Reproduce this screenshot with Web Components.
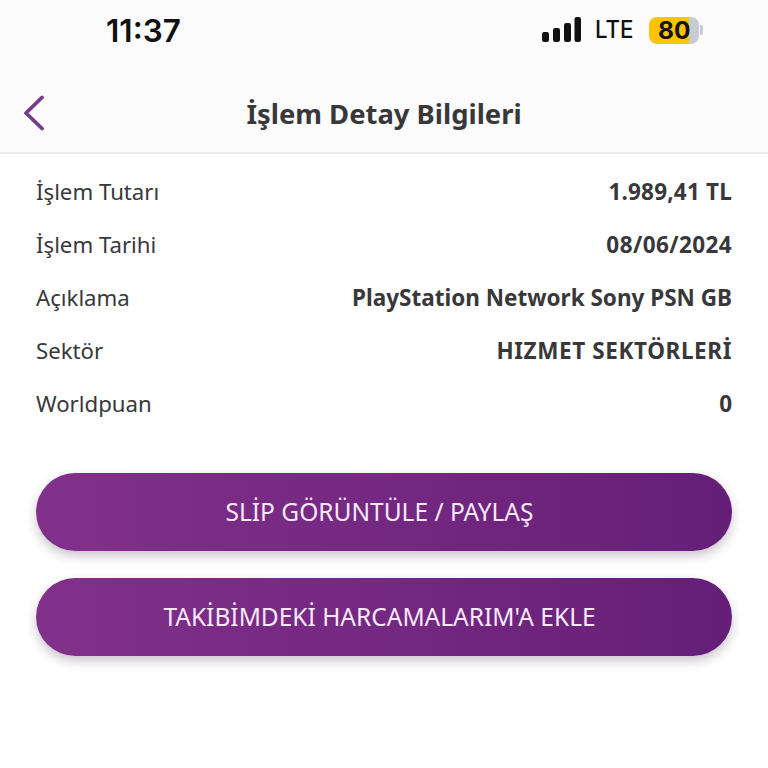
<!DOCTYPE html>
<html lang="tr"><head><meta charset="utf-8"><style>
html,body{margin:0;padding:0;background:#fff}
body{width:768px;height:768px;overflow:hidden;font-family:"Noto Sans","Open Sans",sans-serif}
</style></head><body>
<app-screen>
<status-bar slot="top"></status-bar>
<nav-header slot="top" title="İşlem Detay Bilgileri"></nav-header>
<detail-row label="İşlem Tutarı" value="1.989,41 TL" spacing=".2px"></detail-row>
<detail-row label="İşlem Tarihi" value="08/06/2024" spacing=".4px"></detail-row>
<detail-row label="Açıklama" value="PlayStation Network Sony PSN GB"></detail-row>
<detail-row label="Sektör" value="HIZMET SEKTÖRLERİ" spacing=".6px"></detail-row>
<detail-row label="Worldpuan" value="0"></detail-row>
<pill-button slot="actions">SLİP GÖRÜNTÜLE / PAYLAŞ</pill-button>
<pill-button slot="actions">TAKİBİMDEKİ HARCAMALARIM'A EKLE</pill-button>
</app-screen>
<script>
function def(name,html,init){
  customElements.define(name,class extends HTMLElement{
    connectedCallback(){
      if(this.shadowRoot)return;
      const r=this.attachShadow({mode:'open'});
      r.innerHTML=html;
      if(init)init(this,r);
    }
  });
}
def('app-screen',`<style>
:host{display:block;width:768px;height:768px;background:#fff}
.top{display:block;background:#fcfcfc;border-bottom:2px solid #e9e9ea;height:152px}
.rows{display:block;padding:11px 36px 0 36px}
.actions{display:flex;flex-direction:column;gap:27px;padding:43px 36px 0 36px}
</style><div class="top"><slot name="top"></slot></div><div class="rows"><slot></slot></div><div class="actions"><slot name="actions"></slot></div>`);
def('status-bar',`<style>
:host{display:flex;height:60px;align-items:center;color:#111;font-family:"Inter","Liberation Sans",sans-serif}
.time{margin-left:106px;padding-top:2px;font-size:31.500px;font-weight:600;line-height:58px}
.right{margin-left:auto;margin-right:65px;display:flex;align-items:center}
.lte{font-size:24px;font-weight:500;margin-left:14px;margin-right:15px;width:39px;line-height:30px;white-space:nowrap;transform:scaleX(.93);transform-origin:left}
.batt{display:flex;align-items:center}
.cell{width:50px;height:27px;border-radius:8px;background:linear-gradient(90deg,#fbc405 0 80%,#c9cbd2 80%);display:flex;align-items:center;padding-left:9px;box-sizing:border-box;font-size:24.500px;font-weight:700;color:#17130a}
.cap{width:3px;height:10px;margin-left:1px;background:#c9cbd2;border-radius:0 2px 2px 0}
</style><span class="time">11:37</span><div class="right">
<svg width="40" height="26" viewBox="0 0 40 26" fill="#111"><rect x="1" y="15" width="7" height="10" rx="2.2"/><rect x="12" y="11" width="7" height="14" rx="2.2"/><rect x="23" y="6" width="7" height="19" rx="2.2"/><rect x="33.500" y="0" width="6.500" height="25" rx="2.2"/></svg>
<span class="lte">LTE</span><span class="batt"><span class="cell">80</span><span class="cap"></span></span></div>`);
def('nav-header',`<style>
:host{display:flex;height:92px;padding-top:16px;box-sizing:border-box;align-items:center;justify-content:center;position:relative}
svg{position:absolute;left:23px;top:35px}
h1{margin:0;font:700 27.400px/1 "Noto Sans",sans-serif;color:#38383b}
</style><svg width="22" height="36" viewBox="0 0 22 36" fill="none"><path d="M19 2.500 3 18 19 33.500" stroke="#753a88" stroke-width="3.800" stroke-linecap="round" stroke-linejoin="round"/></svg><h1></h1>`,
(h,r)=>{r.querySelector('h1').textContent=h.getAttribute('title')});
def('detail-row',`<style>
:host{display:flex;height:53px;align-items:center;justify-content:space-between;font-size:22.200px;color:#38383b}
b{font-weight:700;font-size:22.500px}
</style><span class="l"></span><b></b>`,
(h,r)=>{r.querySelector('.l').textContent=h.getAttribute('label');const b=r.querySelector('b');b.textContent=h.getAttribute('value');const s=h.getAttribute('spacing');if(s)b.style.letterSpacing=s});
def('pill-button',`<style>
:host{display:flex;height:78px;box-sizing:border-box;padding:0 9px 2px 0;border-radius:39px;align-items:center;justify-content:center;background:linear-gradient(90deg,#82318a 0%,#651f78 100%);color:#f9e9fa;font-size:24.500px;box-shadow:0 5px 11px rgba(50,30,60,.26)}
</style><slot></slot>`);
</script>
</body></html>
